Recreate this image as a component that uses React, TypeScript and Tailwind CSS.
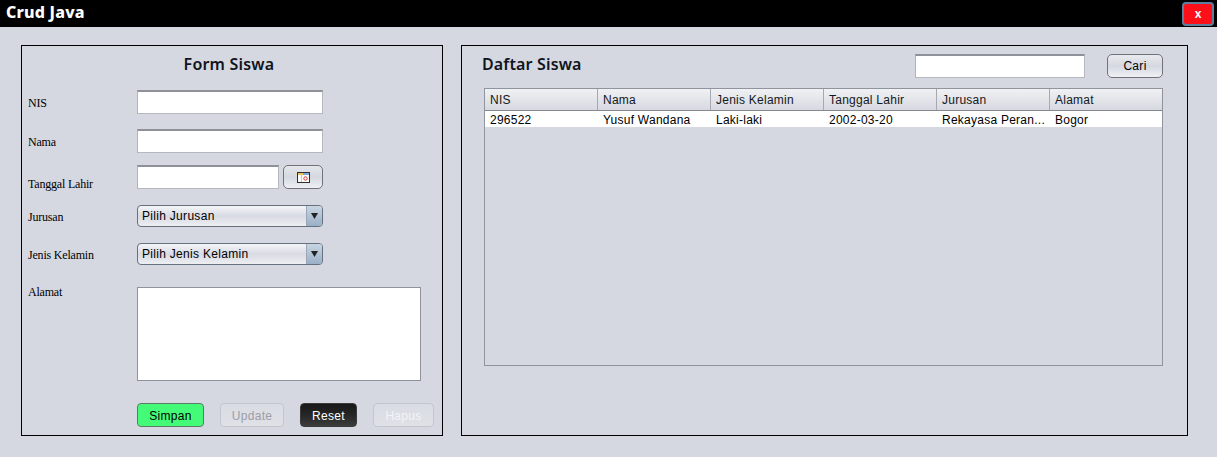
const labelCls = "w-[109px] shrink-0 text-[12px] leading-[14px] tracking-[-0.2px] text-black font-['Liberation_Serif',serif]";
const inputCls = "h-6 bg-white border border-[#b5b8bd] border-t-2 border-t-[#8e9298] border-l-[#aeb1b6]";
const columns = ["NIS", "Nama", "Jenis Kelamin", "Tanggal Lahir", "Jurusan", "Alamat"];
const row = ["296522", "Yusuf Wandana", "Laki-laki", "2002-03-20", "Rekayasa Peran...", "Bogor"];

function CalendarIcon() {
  return (
    <svg width="13" height="11" viewBox="0 0 13 11">
      <rect x="0.5" y="0.5" width="12" height="10" fill="#fbfbf8" stroke="#2e2e2e" />
      <rect x="1" y="1" width="5" height="2" fill="#e8c35a" />
      <rect x="6" y="1" width="6" height="2" fill="#7fa8d8" />
      <rect x="4" y="3" width="1" height="7" fill="#c9c9c4" />
      <circle cx="8.5" cy="6.5" r="1.7" fill="none" stroke="#e0403c" />
    </svg>
  );
}

function Combo({ text }: { text: string }) {
  return (
    <div className="h-[22px] w-[186px] flex rounded-[4px] border border-[#66707e] overflow-hidden bg-gradient-to-b from-[#f4f5f8] via-[#d8dbe3] to-[#eceef2]">
      <span className="flex-1 pl-1 text-[12px] leading-[21px] tracking-[0.3px] text-black font-['Liberation_Sans',sans-serif]">{text}</span>
      <span className="w-4 flex items-center justify-center border-l border-[#9aa6b6] bg-gradient-to-b from-[#c8d5e2] to-[#9ab0c6]">
        <svg width="7" height="6" viewBox="0 0 7 6"><path d="M0 0h7L3.5 6z" fill="#222" /></svg>
      </span>
    </div>
  );
}

export default function App() {
  return (
    <div className="h-[457px] w-[1217px] overflow-hidden bg-[#d5d8e0] flex flex-col">
      {/* Title bar */}
      <div className="h-[27px] shrink-0 bg-black flex items-start justify-between pl-[6px] pr-[3px]">
        <span className="text-[16px] leading-[24px] font-extrabold tracking-[0.2px] text-white font-['Noto_Sans',sans-serif]">Crud Java</span>
        <button className="mt-[2px] h-[24px] w-[32px] rounded-[4px] border-2 border-[#5f7f9f] bg-[#ff0f17] text-white text-[12px] font-bold leading-[18px] font-['Liberation_Sans',sans-serif]">x</button>
      </div>

      <div className="flex items-start pt-[18px] pl-[21px]">
        {/* Form */}
        <div className="w-[422px] h-[391px] shrink-0 border border-black pl-[6px] pt-[6px]">
          <h2 className="w-[402px] text-center text-[16px] leading-[24px] font-semibold tracking-[0.2px] text-[#10141c] font-['Noto_Sans',sans-serif]">Form Siswa</h2>
          <div className="mt-[14px] flex">
            <label className={`${labelCls} mt-[6px]`}>NIS</label>
            <div className={`${inputCls} w-[186px]`} />
          </div>
          <div className="mt-[15px] flex">
            <label className={`${labelCls} mt-[6px]`}>Nama</label>
            <div className={`${inputCls} w-[186px]`} />
          </div>
          <div className="mt-3 flex">
            <label className={`${labelCls} mt-[12px]`}>Tanggal Lahir</label>
            <div className={`${inputCls} w-[142px]`} />
            <button className="ml-1 h-6 w-10 rounded-[5px] border border-[#6f7278] bg-gradient-to-b from-[#e4e6ea] via-[#d5d8e0] to-[#eef0f4] flex items-center justify-center">
              <CalendarIcon />
            </button>
          </div>
          <div className="mt-[14px] flex">
            <label className={`${labelCls} mt-[5px]`}>Jurusan</label>
            <Combo text="Pilih Jurusan" />
          </div>
          <div className="mt-4 flex">
            <label className={`${labelCls} mt-[5px]`}>Jenis Kelamin</label>
            <Combo text="Pilih Jenis Kelamin" />
          </div>
          <div className="mt-[22px] flex">
            <label className={`${labelCls} -mt-[2px]`}>Alamat</label>
            <div className="h-[94px] w-[284px] bg-white border border-[#8e929c]" />
          </div>
          <div className="mt-[22px] ml-[109px] flex gap-4 text-[12px] font-['Liberation_Sans',sans-serif] tracking-[0.3px]">
            <button className="h-6 w-[67px] pt-px rounded-[4px] border border-[#5d7a68] bg-[#44fb78] text-black">Simpan</button>
            <button className="h-6 w-[64px] pt-px rounded-[4px] border border-[#c3c6cd] bg-gradient-to-b from-[#d9dce3] to-[#dfe1e7] text-[#9b9ea6]">Update</button>
            <button className="h-6 w-[57px] pt-px rounded-[4px] border border-[#3a3a3a] bg-gradient-to-b from-[#181818] via-[#262626] to-[#3c3c3c] text-white">Reset</button>
            <button className="h-6 w-[61px] pt-px rounded-[4px] border border-[#c3c6cd] bg-gradient-to-b from-[#d9dce3] to-[#dfe1e7] text-[#f2f3f5]">Hapus</button>
          </div>
        </div>

        {/* Table */}
        <div className="ml-[18px] w-[727px] h-[391px] shrink-0 border border-black">
          <div className="flex items-start pl-[20px] pt-2">
            <h2 className="w-[433px] text-[16px] leading-[21px] font-semibold tracking-[0.15px] text-[#10141c] font-['Noto_Sans',sans-serif]">Daftar Siswa</h2>
            <div className={`${inputCls} w-[170px]`} />
            <button className="ml-[22px] h-6 w-[56px] rounded-[5px] border border-[#6f7278] bg-gradient-to-b from-[#e8eaee] via-[#d5d8e0] to-[#eef0f4] text-[12px] tracking-[0.3px] text-black font-['Liberation_Sans',sans-serif]">Cari</button>
          </div>
          <div className="mt-[10px] ml-[22px] w-[679px] h-[278px] overflow-hidden border border-[#90949c] font-['Liberation_Sans',sans-serif] text-[12px] tracking-[0.25px]">
            <div className="h-[22px] flex border-b border-[#85898f] bg-gradient-to-b from-[#f0f1f4] to-[#d6d9e0]">
              {columns.map((c) => (
                <div key={c} className="w-[113px] shrink-0 pl-[5px] leading-[22px] text-[#141820] border-r border-[#a6a9b0]">{c}</div>
              ))}
            </div>
            <div className="h-4 flex bg-white">
              {row.map((c) => (
                <div key={c} className="w-[113px] shrink-0 pl-[5px] leading-[18px] text-black whitespace-nowrap">{c}</div>
              ))}
            </div>
          </div>
        </div>
      </div>
    </div>
  );
}
